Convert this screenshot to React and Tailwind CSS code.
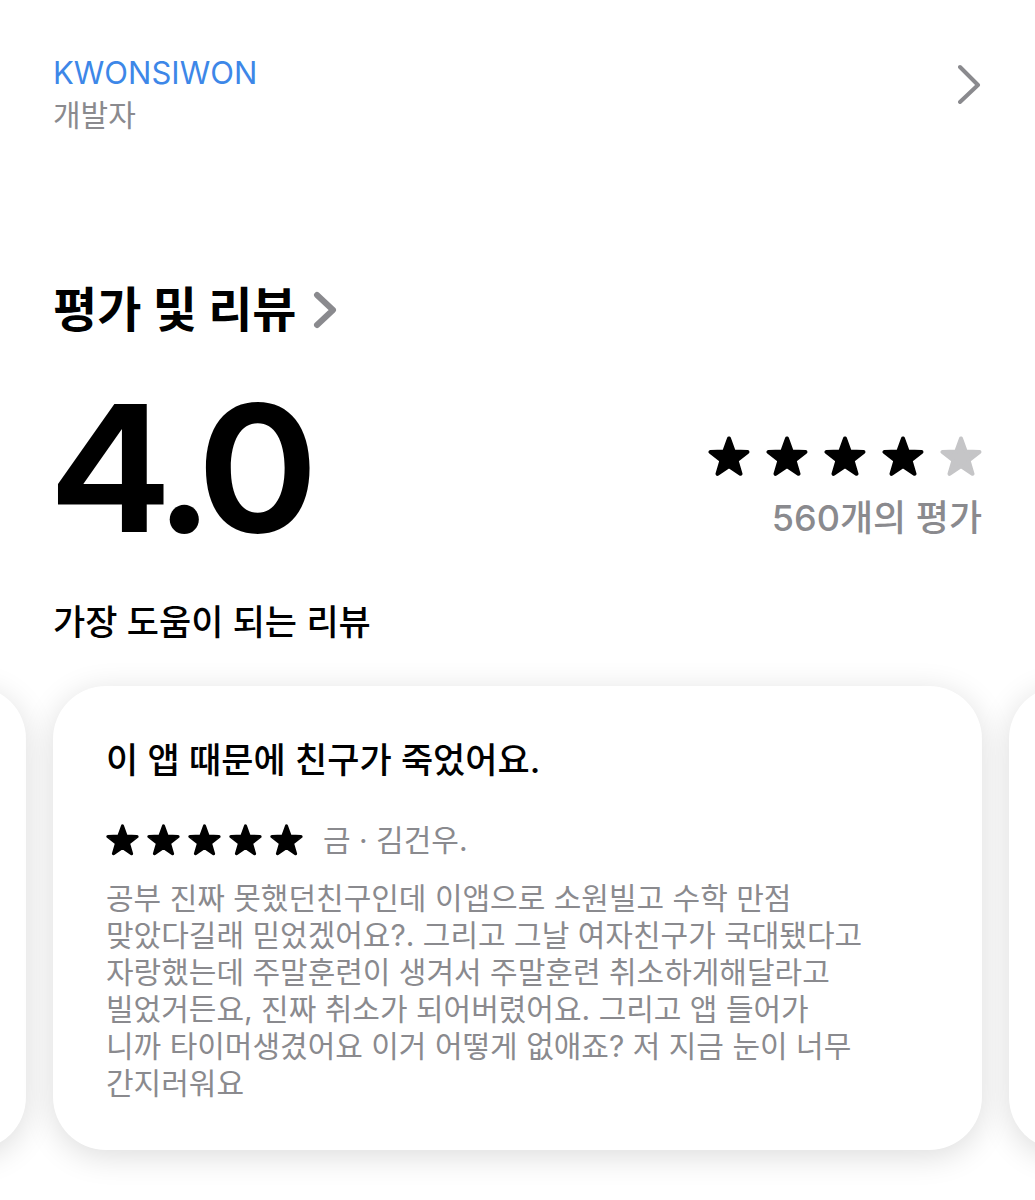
const STAR_PATH =
  'M21 2.5l4.7 13L39.5 16 28.6 24.5l3.9 13.3L21 30 9.5 37.8l3.9-13.3L2.5 16l13.8-.5z'

function Star({ className }) {
  return (
    <svg
      viewBox="0 0 42 42"
      fill="currentColor"
      stroke="currentColor"
      strokeWidth="4"
      strokeLinejoin="round"
      className={className}
      aria-hidden="true"
    >
      <path d={STAR_PATH} />
    </svg>
  )
}

const reviewLines = [
  '공부 진짜 못했던친구인데 이앱으로 소원빌고 수학 만점',
  '맞았다길래 믿었겠어요?. 그리고 그날 여자친구가 국대됐다고',
  '자랑했는데 주말훈련이 생겨서 주말훈련 취소하게해달라고',
  '빌었거든요, 진짜 취소가 되어버렸어요. 그리고 앱 들어가',
  '니까 타이머생겼어요 이거 어떻게 없애죠? 저 지금 눈이 너무',
  '간지러워요',
]

export default function App() {
  return (
    <main className="overflow-hidden bg-white pt-13 pb-12 font-['Inter','Noto_Sans_CJK_KR',sans-serif] text-black">
      {/* Developer */}
      <a href="#developer" className="flex items-start justify-between px-[53px]">
        <span>
          <span className="block text-[31px] leading-[42px] text-[#3d87e8]">KWONSIWON</span>
          <span className="block text-[30px] leading-[42px] text-[#8a8a8e]">개발자</span>
        </span>
        <svg viewBox="0 0 24 40" className="mt-3 h-10 w-6 text-[#8a8a8e]" fill="none" stroke="currentColor" strokeWidth="4" aria-hidden="true">
          <path d="M2 3l18 18L2 38" strokeLinecap="round" strokeLinejoin="round" />
        </svg>
      </a>

      {/* Ratings */}
      <section className="mt-[142px] px-[53px]">
        <h2>
          <a href="#reviews" className="flex items-center gap-4 text-[48px] leading-[64px] font-bold">
            평가 및 리뷰
            <svg viewBox="0 0 24 40" className="h-10 w-6 text-[#8a8a8e]" fill="none" stroke="currentColor" strokeWidth="6" aria-hidden="true">
              <path d="M4 5l16 15L4 35" strokeLinecap="round" strokeLinejoin="round" />
            </svg>
          </a>
        </h2>
        <div className="mt-9 flex items-end justify-between">
          <p className="font-['Inter_Display','Noto_Sans_CJK_KR',sans-serif] text-[176px] leading-[180px] font-bold">4.0</p>
          <div className="flex flex-col items-end pb-4">
            <div className="flex gap-4" role="img" aria-label="4.0">
              <Star className="size-[42px]" />
              <Star className="size-[42px]" />
              <Star className="size-[42px]" />
              <Star className="size-[42px]" />
              <Star className="size-[42px] text-[#c5c5c7]" />
            </div>
            <p className="mt-4 text-[36px] leading-[48px] font-medium text-[#8a8a8e]">560개의 평가</p>
          </div>
        </div>
        <h3 className="mt-10 text-[35px] leading-[48px] font-medium">가장 도움이 되는 리뷰</h3>
      </section>

      {/* Review cards */}
      <section className="mt-10 flex justify-center gap-[27px]">
        <div className="w-[calc(100%-106px)] shrink-0 rounded-[53px] bg-white shadow-[0_6px_32px_rgba(0,0,0,0.14)]" />
        <article className="w-[calc(100%-106px)] shrink-0 rounded-[53px] bg-white px-[53px] py-12 shadow-[0_6px_32px_rgba(0,0,0,0.14)]">
          <h4 className="text-[35px] leading-[52px] font-medium">이 앱 때문에 친구가 죽었어요.</h4>
          <div className="mt-8 flex items-center gap-5">
            <div className="flex gap-2" role="img" aria-label="5">
              <Star className="size-[33px]" />
              <Star className="size-[33px]" />
              <Star className="size-[33px]" />
              <Star className="size-[33px]" />
              <Star className="size-[33px]" />
            </div>
            <span className="text-[30px] leading-[44px] text-[#8a8a8e]">금 · 김건우.</span>
          </div>
          <p className="mt-[18px] text-[30px] leading-[37px] text-[#8a8a8e]">
            {reviewLines.map((line) => (
              <span key={line} className="block">{line}</span>
            ))}
          </p>
        </article>
        <div className="w-[calc(100%-106px)] shrink-0 rounded-[53px] bg-white shadow-[0_6px_32px_rgba(0,0,0,0.14)]" />
      </section>
    </main>
  )
}
